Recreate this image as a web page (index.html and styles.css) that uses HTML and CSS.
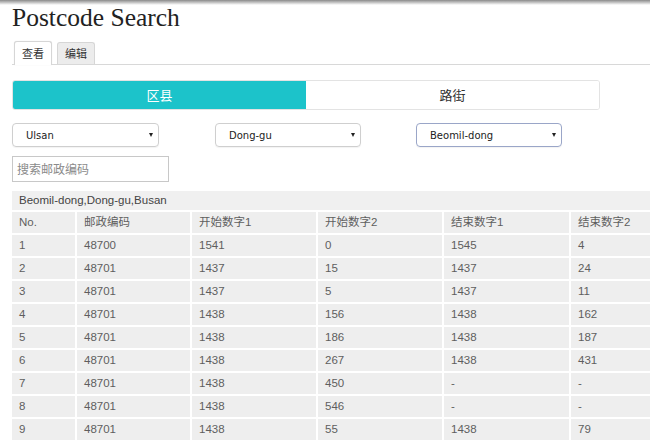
FILE: index.html
```html
<!DOCTYPE html>
<html lang="zh">
<head>
<meta charset="utf-8">
<title>Postcode Search</title>
<link rel="stylesheet" href="styles.css">
</head>
<body>
<div class="page">
  <h1 class="title">Postcode Search</h1>
  <div class="tabs">
    <div class="tab active">查看</div>
    <div class="tab">编辑</div>
  </div>
  <div class="segment">
    <div class="seg on">区县</div>
    <div class="seg">路街</div>
  </div>
  <div class="selects">
    <div class="select s1"><span>Ulsan</span><i class="caret"></i></div>
    <div class="select s2"><span>Dong-gu</span><i class="caret"></i></div>
    <div class="select s3 focus"><span>Beomil-dong</span><i class="caret"></i></div>
  </div>
  <div class="search">搜索邮政编码</div>
  <table class="grid">
    <colgroup>
      <col class="c1"><col class="c2"><col class="c3"><col class="c4"><col class="c5"><col class="c6">
    </colgroup>
    <tr class="cap"><td colspan="6">Beomil-dong,Dong-gu,Busan</td></tr>
    <tr><td>No.</td><td>邮政编码</td><td>开始数字1</td><td>开始数字2</td><td>结束数字1</td><td>结束数字2</td></tr>
    <tr><td>1</td><td>48700</td><td>1541</td><td>0</td><td>1545</td><td>4</td></tr>
    <tr><td>2</td><td>48701</td><td>1437</td><td>15</td><td>1437</td><td>24</td></tr>
    <tr><td>3</td><td>48701</td><td>1437</td><td>5</td><td>1437</td><td>11</td></tr>
    <tr><td>4</td><td>48701</td><td>1438</td><td>156</td><td>1438</td><td>162</td></tr>
    <tr><td>5</td><td>48701</td><td>1438</td><td>186</td><td>1438</td><td>187</td></tr>
    <tr><td>6</td><td>48701</td><td>1438</td><td>267</td><td>1438</td><td>431</td></tr>
    <tr><td>7</td><td>48701</td><td>1438</td><td>450</td><td>-</td><td>-</td></tr>
    <tr><td>8</td><td>48701</td><td>1438</td><td>546</td><td>-</td><td>-</td></tr>
    <tr><td>9</td><td>48701</td><td>1438</td><td>55</td><td>1438</td><td>79</td></tr>
  </table>
</div>
</body>
</html>
```

FILE: styles.css
```css
html, body {
  margin: 0;
  padding: 0;
  overflow: hidden;
  background: #fff;
}
body {
  font-family: "Liberation Sans", "Noto Sans CJK SC", sans-serif;
  color: #333;
}
body::before {
  content: "";
  position: fixed;
  left: 0;
  top: 0;
  right: 0;
  height: 5px;
  background: linear-gradient(#8a8a8a, rgba(255,255,255,0));
}
.page {
  padding: 3px 0 0 12px;
}
.title {
  margin: 0;
  font-family: "Liberation Serif", serif;
  font-weight: normal;
  font-size: 25.5px;
  line-height: 30px;
  color: #222;
}
.tabs {
  margin-top: 8px;
  display: flex;
  align-items: flex-end;
  gap: 5px;
  padding-left: 2px;
  border-bottom: 1px solid #d8d8d8;
  height: 23px;
}
.tab {
  font-family: "Noto Sans CJK SC", sans-serif;
  font-size: 11px;
  line-height: 20px;
  height: 21px;
  padding: 0 7px;
  border: 1px solid #d6d6d6;
  border-bottom: none;
  border-radius: 3px 3px 0 0;
  background: #ececec;
  color: #333;
}
.tab.active {
  background: #fff;
  height: 23px;
  line-height: 23px;
  margin-bottom: -1px;
  box-shadow: 0 0 1px #ddd;
}
.segment {
  margin-top: 15px;
  width: 586px;
  height: 28px;
  display: flex;
  border: 1px solid #e3e3e3;
  border-radius: 3px;
  overflow: hidden;
}
.seg {
  flex: 1;
  text-align: center;
  font-family: "Noto Sans CJK SC", sans-serif;
  font-size: 13px;
  line-height: 28px;
  color: #333;
  background: #fff;
}
.seg.on {
  background: #1cc3ca;
  color: #fff;
}
.selects {
  margin-top: 13px;
  display: flex;
}
.select {
  box-sizing: border-box;
  width: 146px;
  height: 24px;
  border: 1px solid #cfcfcf;
  border-radius: 4px;
  display: flex;
  align-items: center;
  justify-content: space-between;
  padding: 0 5px 0 13px;
  font-family: "DejaVu Sans", sans-serif;
  font-size: 10px;
  color: #222;
  box-shadow: 0 1px 1px rgba(0,0,0,0.05);
}
.s1 { width: 147px; }
.s2 { margin-left: 56px; }
.s3 { margin-left: 55px; }
.select.focus {
  border-color: #9aa6c8;
}
.caret {
  width: 0;
  height: 0;
  border-left: 2.5px solid transparent;
  border-right: 2.5px solid transparent;
  border-top: 4px solid #222;
}
.search {
  margin-top: 9px;
  box-sizing: border-box;
  width: 157px;
  height: 26px;
  border: 1px solid #c8c8c8;
  padding-left: 4px;
  font-family: "Noto Sans CJK SC", sans-serif;
  font-size: 12px;
  line-height: 24px;
  color: #8a8a8a;
}
.grid {
  margin: 9px 0 0 0;
  border-collapse: collapse;
  table-layout: fixed;
  width: 638px;
  background: #eeeeee;
  font-family: "Liberation Sans", "Noto Sans CJK SC", sans-serif;
  font-size: 11.5px;
  color: #5e5e5e;
}
.c1 { width: 64px; }
.c2 { width: 115px; }
.c3 { width: 126px; }
.c4 { width: 126px; }
.c5 { width: 127px; }
.c6 { width: 80px; }
.grid td {
  border: 2px solid #fff;
  height: 21px;
  padding: 0 7px;
  line-height: 21px;
  white-space: nowrap;
  overflow: hidden;
}
.grid td:first-child {
  border-left: none;
}
.grid td:last-child {
  border-right: none;
}
.grid tr.cap td {
  height: 19px;
  line-height: 19px;
  color: #444;
  background: #f0f0f0;
  border-top: none;
}
```
